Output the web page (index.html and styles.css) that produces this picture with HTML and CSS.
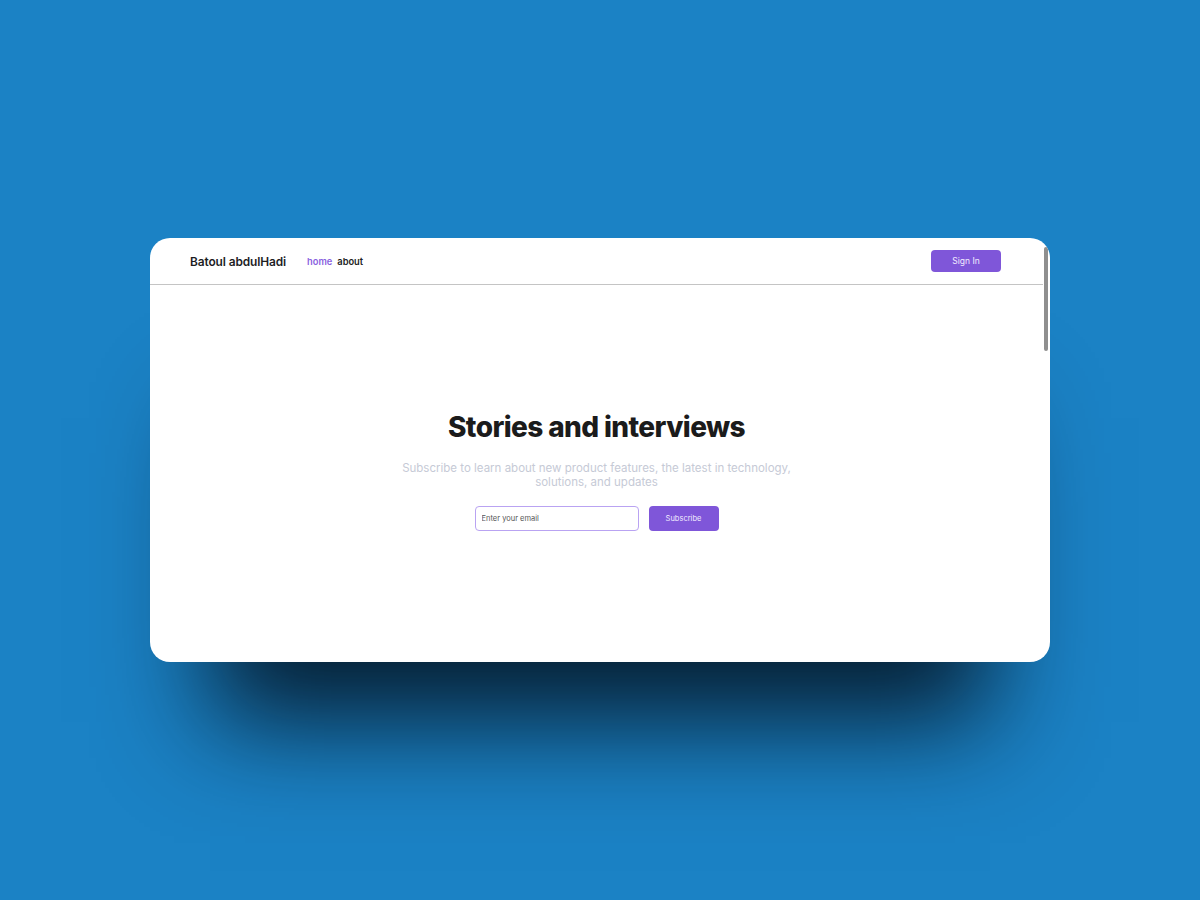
FILE: index.html
```html
<!DOCTYPE html>
<html lang="en">
<head>
<meta charset="utf-8">
<title>Batoul abdulHadi</title>
<link rel="stylesheet" href="styles.css">
</head>
<body>
<div class="stage">
  <div class="window">
    <div class="content">
      <header class="topbar">
        <div class="brand">Batoul abdulHadi</div>
        <nav class="nav">
          <a class="nav-link active" href="#">home</a>
          <a class="nav-link" href="#">about</a>
        </nav>
        <button class="btn btn-signin">Sign In</button>
      </header>
      <main class="hero">
        <h1 class="hero-title">Stories and interviews</h1>
        <p class="hero-sub">Subscribe to learn about new product features, the latest in technology, solutions, and updates</p>
        <form class="subscribe">
          <input class="email" type="email" placeholder="Enter your email">
          <button class="btn btn-subscribe" type="button">Subscribe</button>
        </form>
      </main>
    </div>
    <div class="scrollbar"><div class="thumb"></div></div>
  </div>
</div>
</body>
</html>
```
FILE: styles.css
```css
* { box-sizing: border-box; }
html, body { margin: 0; padding: 0; }
body {
  background: #1b82c5;
  font-family: Inter, "Noto Sans", sans-serif;
  width: 1200px;
  height: 900px;
  overflow: hidden;
}
.stage {
  padding-top: 238px;
  display: flex;
  justify-content: center;
}
.window {
  width: 900px;
  height: 424px;
  background: #fff;
  border-radius: 20px;
  overflow: hidden;
  display: flex;
  box-shadow: 0 120px 100px -60px rgba(2, 12, 22, 0.85);
}
.content {
  flex: 1;
  min-width: 0;
}
.scrollbar {
  width: 7px;
  padding: 9px 2px 0 1px;
}
.thumb {
  width: 4px;
  height: 104px;
  background: #8f8f8f;
  border-radius: 2px;
}
.topbar {
  height: 47px;
  display: flex;
  align-items: center;
  padding: 0 42px 0 40px;
  border-bottom: 1px solid #c4c4c4;
}
.brand {
  font-size: 11.9px;
  font-weight: 600;
  color: #1d1d1f;
  letter-spacing: -0.1px;
}
.nav {
  display: flex;
  gap: 5px;
  margin-left: 21px;
}
.nav-link {
  font-size: 9.3px;
  font-weight: 600;
  color: #222;
  text-decoration: none;
}
.nav-link.active { color: #8a5fe0; }
.btn {
  font-family: inherit;
  border: none;
  background: #7f56d9;
  color: #f2ecff;
  border-radius: 4px;
  cursor: pointer;
}
.btn-signin {
  margin-left: auto;
  width: 70px;
  height: 22px;
  font-size: 8.5px;
}
.hero {
  height: 376px;
  padding-top: 124px;
  display: flex;
  flex-direction: column;
  align-items: center;
}
.hero-title {
  margin: 0;
  font-size: 28px;
  font-weight: 800;
  color: #1b1b1b;
  letter-spacing: -0.6px;
  line-height: 36px;
}
.hero-sub {
  margin: 16px 0 0;
  max-width: 420px;
  text-align: center;
  font-size: 11.5px;
  line-height: 14px;
  color: #c6cad6;
}
.subscribe {
  margin-top: 17px;
  display: flex;
  gap: 10px;
}
.email {
  width: 164px;
  height: 25px;
  border: 1px solid #b9a3f2;
  border-radius: 4px;
  padding: 0 6px;
  font-family: inherit;
  font-size: 7.5px;
  color: #333;
  outline: none;
}
.email::placeholder { color: #555; }
.btn-subscribe {
  width: 70px;
  height: 25px;
  font-size: 7.5px;
}
```
